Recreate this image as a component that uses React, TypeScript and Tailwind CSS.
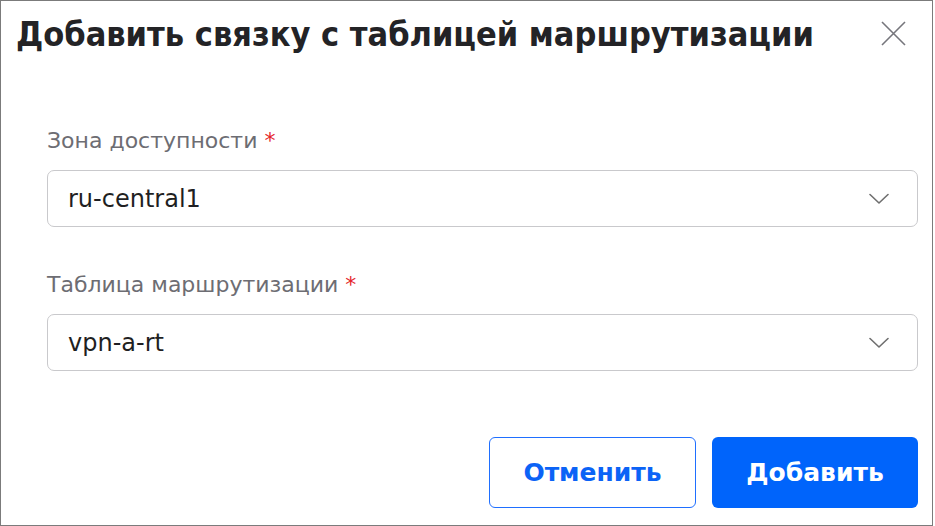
import React from "react";

function Chevron() {
  return (
    <svg width="20" height="12" viewBox="0 0 20 12" fill="none">
      <path d="M1 1.5 L10 10 L19 1.5" stroke="#6f6f6f" strokeWidth="1.6" strokeLinecap="round" strokeLinejoin="round" />
    </svg>
  );
}

function Field({ label, value }: { label: string; value: string }) {
  return (
    <div className="flex flex-col">
      <div className="text-[22px] leading-[26px] text-[#6d6d73]">
        {label} <span className="text-[#e5262b]">*</span>
      </div>
      <div className="mt-[16px] flex h-[57px] items-center justify-between rounded-[7px] border border-[#c9c9cc] pl-[20px] pr-[28px]">
        <span className="text-[24px] text-[#1f1f22]">{value}</span>
        <Chevron />
      </div>
    </div>
  );
}

export default function App() {
  return (
    <div
      className="box-border flex h-[526px] w-[933px] flex-col border border-[#7b7b7b] bg-white"
      style={{ fontFamily: '"DejaVu Sans", sans-serif' }}
    >
      <div className="flex items-start justify-between pl-[15px] pr-[26px] pt-[10px]">
        <h1
          className="text-[34px] font-bold leading-[46px] text-[#232326]"
          style={{ fontFamily: '"DejaVu Sans Condensed", "DejaVu Sans", sans-serif', fontStretch: "condensed" }}
        >
          Добавить связку с таблицей маршрутизации
        </h1>
        <svg className="mt-[10px]" width="25" height="25" viewBox="0 0 25 25" fill="none">
          <path d="M1 1 L24 24 M24 1 L1 24" stroke="#76767c" strokeWidth="1.6" />
        </svg>
      </div>
      <div className="flex flex-col gap-[45px] pl-[46px] pr-[14px] pt-[71px]">
        <Field label="Зона доступности" value="ru-central1" />
        <Field label="Таблица маршрутизации" value="vpn-a-rt" />
      </div>
      <div className="mt-auto flex justify-end gap-[16px] pb-[17px] pr-[14px]">
        <button className="flex h-[71px] w-[207px] items-center justify-center rounded-[6px] border border-[#1f6fff] bg-white text-[25px] font-bold text-[#0b63f6]">
          Отменить
        </button>
        <button className="flex h-[71px] w-[206px] items-center justify-center rounded-[6px] bg-[#0064fb] text-[25px] font-bold text-white">
          Добавить
        </button>
      </div>
    </div>
  );
}
